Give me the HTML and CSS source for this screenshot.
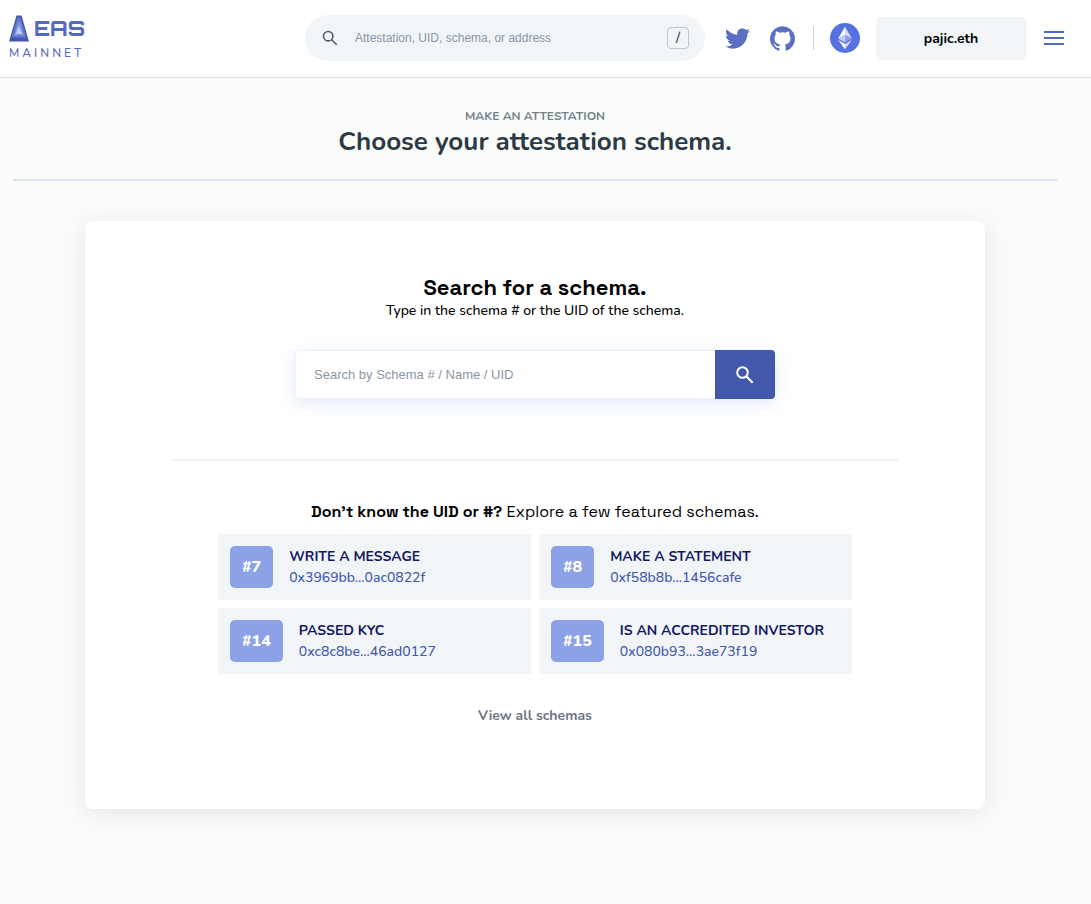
FILE: index.html
```html
<!DOCTYPE html>
<html lang="en">
<head>
<meta charset="utf-8">
<meta name="viewport" content="width=device-width, initial-scale=1">
<title>EAS - Make an attestation</title>
<link rel="stylesheet" href="styles.css">
</head>
<body>
<header class="header">
  <a class="logo" href="#">
    <span class="logo-row">
      <svg class="logo-mark" viewBox="0 0 20 27" aria-hidden="true">
        <path fill="#4358ab" d="M7.500 0.500h5L20 26.500H0z"/>
        <path fill="#5f76cc" d="M8.200 3h3.600l5.700 19.500h-15z"/>
        <path fill="#7d95e2" d="M9 7h2l4.200 13.500H4.800z"/>
        <path fill="#bccbf6" d="M10 11l3.300 8H6.700z"/>
      </svg>
      <span class="logo-name">EAS</span>
    </span>
    <span class="logo-network">MAINNET</span>
  </a>
  <form class="top-search" role="search">
    <svg class="top-search-icon" viewBox="0 0 16 16" aria-hidden="true"><circle cx="6.200" cy="6.200" r="4.700"/><path d="M9.700 9.700l5 5"/></svg>
    <input class="top-search-input" type="search" aria-label="Search attestations" placeholder="Attestation, UID, schema, or address">
    <kbd class="key">/</kbd>
  </form>
  <nav class="actions" aria-label="Account and links">
    <a class="social" href="#" aria-label="Twitter">
      <svg viewBox="0 0 24 24"><path d="M23.950 4.570a10 10 0 0 1-2.820.770 4.960 4.960 0 0 0 2.160-2.720 9.990 9.990 0 0 1-3.120 1.190 4.920 4.920 0 0 0-8.380 4.480A13.930 13.930 0 0 1 1.640 3.160a4.920 4.920 0 0 0 1.520 6.570 4.900 4.900 0 0 1-2.230-.610v.060a4.920 4.920 0 0 0 3.950 4.830 5 5 0 0 1-2.210.080 4.940 4.940 0 0 0 4.600 3.420A9.870 9.870 0 0 1 0 19.540a13.940 13.940 0 0 0 7.550 2.210c9.050 0 14-7.500 14-13.980 0-.210 0-.420-.020-.630a9.940 9.940 0 0 0 2.460-2.550z"/></svg>
    </a>
    <a class="social" href="#" aria-label="GitHub">
      <svg viewBox="0 0 24 24"><path d="M12 .300a12 12 0 0 0-3.800 23.380c.600.120.830-.260.830-.570v-2.230c-3.340.720-4.040-1.420-4.040-1.420-.550-1.390-1.340-1.760-1.340-1.760-1.080-.740.090-.730.090-.730 1.200.080 1.840 1.240 1.840 1.240 1.070 1.830 2.810 1.300 3.500 1 .100-.780.410-1.310.760-1.610-2.670-.300-5.470-1.330-5.470-5.930 0-1.310.470-2.380 1.240-3.220-.140-.300-.540-1.520.100-3.180 0 0 1.010-.320 3.300 1.230a11.500 11.500 0 0 1 6 0c2.280-1.550 3.290-1.230 3.290-1.230.640 1.660.240 2.880.120 3.180a4.650 4.650 0 0 1 1.230 3.220c0 4.610-2.810 5.630-5.480 5.920.420.360.810 1.100.810 2.220v3.290c0 .310.200.690.820.570A12 12 0 0 0 12 .300z"/></svg>
    </a>
    <span class="separator"></span>
    <button class="chain" type="button" aria-label="Ethereum">
      <svg viewBox="0 0 30 30"><circle cx="15" cy="15" r="15" fill="#5671e0"/><path fill="#fff" d="M15 3.800v8.400l-6.900 3.200z"/><path fill="#d3daf8" d="M15 3.800l6.900 11.600-6.900-3.200z"/><path fill="#c0caf6" d="M15 12.200v7.300l-6.900-4.100z"/><path fill="#8d9eea" d="M15 12.200l6.900 3.200-6.900 4.100z"/><path fill="#fff" d="M8.100 17.100l6.900 4v5.200z"/><path fill="#d3daf8" d="M21.900 17.100l-6.900 4v5.200z"/></svg>
    </button>
    <button class="account" type="button">pajic.eth</button>
    <button class="menu" type="button" aria-label="Menu"><svg viewBox="0 0 20 14"><path d="M0 1h20M0 7h20M0 13h20"/></svg></button>
  </nav>
</header>
<main class="main">
  <div class="intro">
    <p class="eyebrow">MAKE AN ATTESTATION</p>
    <h1 class="title">Choose your attestation schema.</h1>
  </div>
  <section class="card">
    <h2 class="card-title">Search for a schema.</h2>
    <p class="card-text">Type in the schema # or the UID of the schema.</p>
    <form class="schema-search">
      <input class="schema-input" type="text" aria-label="Search schemas" placeholder="Search by Schema # / Name / UID">
      <button class="schema-button" type="submit" aria-label="Search"><svg viewBox="0 0 18 18"><circle cx="6.500" cy="6.500" r="5.300"/><path d="M10.500 10.500l6.200 6.200"/></svg></button>
    </form>
    <div class="featured">
      <p class="featured-title"><strong>Don’t know the UID or #?</strong> Explore a few featured schemas.</p>
      <div class="schemas">
        <a class="schema" href="#"><span class="badge">#7</span><span class="schema-info"><span class="schema-name">WRITE A MESSAGE</span><span class="schema-uid">0x3969bb...0ac0822f</span></span></a>
        <a class="schema" href="#"><span class="badge">#8</span><span class="schema-info"><span class="schema-name">MAKE A STATEMENT</span><span class="schema-uid">0xf58b8b...1456cafe</span></span></a>
        <a class="schema" href="#"><span class="badge">#14</span><span class="schema-info"><span class="schema-name">PASSED KYC</span><span class="schema-uid">0xc8c8be...46ad0127</span></span></a>
        <a class="schema" href="#"><span class="badge">#15</span><span class="schema-info"><span class="schema-name">IS AN ACCREDITED INVESTOR</span><span class="schema-uid">0x080b93...3ae73f19</span></span></a>
      </div>
      <a class="view-all" href="#">View all schemas</a>
    </div>
  </section>
</main>
</body>
</html>
```
FILE: styles.css
```css
* { box-sizing: border-box; }
body { margin: 0; min-height: 100vh; background: #fafcf9; color: #000; font-family: Nunito, Lato, sans-serif; font-size: 14px; font-weight: 500; }
p, h1, h2 { margin: 0; }
a { color: inherit; text-decoration: none; }
button { padding: 0; border: 0; background: none; font: inherit; cursor: pointer; }
svg { display: block; }

.header { display: flex; align-items: center; gap: 20px; padding: 15px 27px 16px 9px; background: #fff; border-bottom: 1px solid #dce0e8; }
.logo { display: flex; flex-direction: column; gap: 3px; margin-right: auto; color: #5469c0; }
.logo-row { display: flex; align-items: center; gap: 5px; }
.logo-mark { width: 20px; height: 27px; }
.logo-name { font: 800 21px/27px Orbitron, "DejaVu Sans", sans-serif; }
.logo-network { font-size: 12px; line-height: 16px; letter-spacing: 3px; }

.top-search { display: flex; align-items: center; flex: 0 1 400px; gap: 17px; height: 46px; padding: 0 16px 0 17px; border-radius: 23px; background: #f1f5f8; }
.top-search-icon { flex: none; width: 16px; height: 16px; fill: none; stroke: #4d5a68; stroke-width: 1.6; }
.top-search-input { flex: 1; min-width: 0; padding: 0; border: 0; outline: 0; background: none; font: 12px/16px "Liberation Sans", Arial, sans-serif; }
.top-search-input::placeholder, .schema-input::placeholder { color: #8996a5; opacity: 1; }
.key { width: 22px; height: 22px; border: 1px solid #bcc8d2; border-radius: 4px; color: #2c3a46; font: 500 14px/20px Nunito, Lato, sans-serif; text-align: center; }

.actions { display: flex; align-items: center; }
.social { width: 25px; margin-right: 20px; fill: #5a6fc4; }
.social + .separator { margin-left: -2px; }
.separator { width: 1px; height: 24px; margin-right: 16px; background: #cfd3da; }
.chain { width: 30px; height: 30px; margin-right: 16px; }
.account { width: 150px; height: 43px; margin-right: 18px; border-radius: 5px; background: #f1f5f8; font-size: 14px; font-weight: 700; }
.menu { width: 20px; }
.menu svg { fill: none; stroke: #5469c0; stroke-width: 2; }

.main { padding: 28px 34px 95px 13px; }
.intro { padding-bottom: 22px; border-bottom: 2px solid #dfe2ea; text-align: center; }
.eyebrow { color: #73808e; font-size: 12px; line-height: 20px; font-weight: 700; }
.title { color: #2c3a46; font-size: 26px; line-height: 31px; font-weight: 700; }

.card { max-width: 900px; margin: 40px auto 0; padding: 52px 87px 83px; border-radius: 8px; background: #fff; box-shadow: 0 4px 24px rgba(30, 40, 60, .1); text-align: center; }
.card-title { font: bold 22px/28px "Space Grotesk", Inter, sans-serif; }
.card-text { font-size: 14px; line-height: 20px; }
.schema-search { display: flex; max-width: 480px; margin: 29px auto 60px; border-radius: 4px; box-shadow: 0 4px 16px rgba(80, 140, 240, .18); }
.schema-input { flex: 1; min-width: 0; height: 49px; padding: 0 18px; border: 1px solid #eff2f7; border-right: 0; border-radius: 4px 0 0 4px; outline: 0; background: #fff; font: 13px/20px "Liberation Sans", Arial, sans-serif; }
.schema-button { display: flex; align-items: center; justify-content: center; width: 60px; border-radius: 0 4px 4px 0; background: #4358ab; }
.schema-button svg { width: 18px; height: 18px; fill: none; stroke: #fff; stroke-width: 2; }

.featured { padding: 40px 46px 0; border-top: 2px solid #f1f4f6; }
.featured-title { font: 16px/22px "Space Grotesk", Inter, sans-serif; }
.schemas { display: grid; grid-template-columns: 1fr 1fr; gap: 8px; margin: 11px 0 32px; }
.schema { display: flex; align-items: center; gap: 16px; padding: 12px; background: #f1f5f8; text-align: left; }
.badge { padding: 0 12px; border-radius: 5px; background: #8da2e6; color: #fff; font-size: 16px; line-height: 42px; font-weight: 800; }
.schema-info { display: flex; flex-direction: column; line-height: 21px; }
.schema-name { color: #131860; font-weight: 700; }
.schema-uid { color: #4358ab; }
.view-all { display: inline-block; color: #6b7885; font-weight: 700; line-height: 20px; }
```
